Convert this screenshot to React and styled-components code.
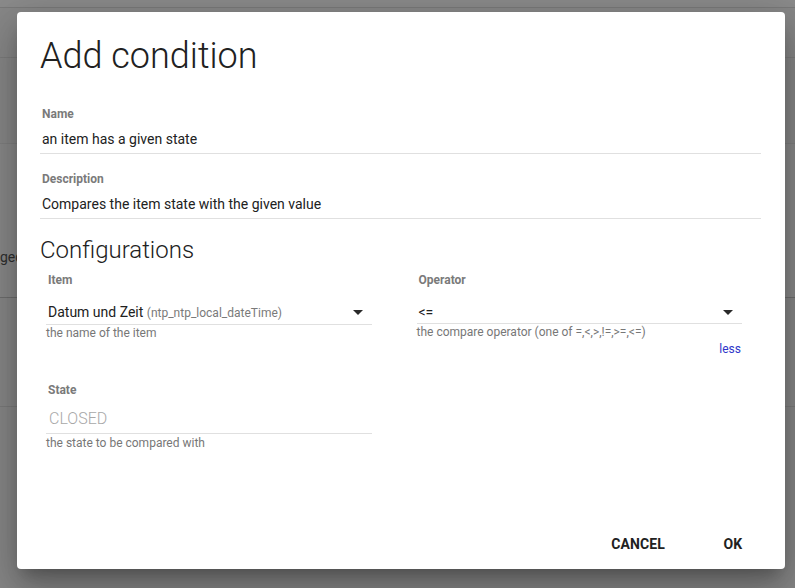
import React from 'react'
import styled, { createGlobalStyle } from 'styled-components'

const GlobalStyle = createGlobalStyle`
  html, body {
    margin: 0;
    padding: 0;
    font-family: Roboto, "Noto Sans", sans-serif;
  }
  * { box-sizing: border-box; }
`

// the page behind the modal, dimmed by the overlay
const Page = styled.div`
  position: relative;
  width: 795px;
  height: 588px;
  overflow: hidden;
  background: #888888;
  display: flex;
  flex-direction: column;
`

const Band = styled.div`
  height: ${p => p.h}px;
  flex: none;
  border-bottom: 1px solid ${p => p.line || '#7d7d7d'};
  background: ${p => p.bg || 'transparent'};
  display: flex;
  align-items: ${p => p.align || 'center'};
`

const BackText = styled.span`
  font-size: 14px;
  color: #2f2f2f;
  margin-bottom: 32px;
`

const Dialog = styled.div`
  position: absolute;
  left: 17px;
  top: 12px;
  width: 768px;
  height: 557px;
  background: #fff;
  border-radius: 4px;
  box-shadow: 0 11px 15px -7px rgba(0,0,0,.25), 0 24px 38px 3px rgba(0,0,0,.16), 0 9px 46px 8px rgba(0,0,0,.14);
  display: flex;
  flex-direction: column;
  padding: 24px 24px 0 23px;
`

const Title = styled.h2`
  margin: 0;
  font-size: 36px;
  line-height: 40px;
  font-weight: 300;
  color: #212121;
`

const Field = styled.div`
  margin-top: ${p => p.top}px;
`

const Label = styled.div`
  font-size: 12px;
  line-height: 16px;
  font-weight: 700;
  color: #7a7a7a;
  padding-left: 2px;
`

const TextValue = styled.div`
  font-size: 14px;
  line-height: 20px;
  color: #212121;
  padding: 7px 0 4px 2px;
  border-bottom: 1px solid #e0e0e0;
`

const SectionTitle = styled.h3`
  margin: 15px 0 0;
  font-size: 24px;
  line-height: 32px;
  font-weight: 300;
  color: #212121;
`

const ConfigGrid = styled.div`
  margin: 6px 19px 0 6px;
  display: grid;
  grid-template-columns: 1fr 1fr;
  column-gap: 45px;
  row-gap: 25px;
  align-items: start;
`

const Select = styled.div`
  margin-top: 14px;
  display: flex;
  align-items: center;
  justify-content: space-between;
  padding: 0 9px 1px 2px;
  border-bottom: 1px solid #e0e0e0;
`

const SelectText = styled.span`
  font-size: 14px;
  line-height: 20px;
  color: #212121;
`

const Secondary = styled.span`
  font-size: 12px;
  color: #7a7a7a;
`

const Placeholder = styled.div`
  margin-top: 11px;
  font-size: 16px;
  line-height: 20px;
  font-weight: 300;
  color: #a8a8a8;
  padding: 0 0 4px 3px;
  border-bottom: 1px solid #e0e0e0;
`

const Hint = styled.div`
  font-size: 12px;
  line-height: 16px;
  color: #777;
  margin-top: ${p => p.top || 0}px;
`

const LessLink = styled.a`
  display: block;
  text-align: right;
  margin-top: 1px;
  padding-right: 1px;
  font-size: 12px;
  line-height: 16px;
  color: #2f36c9;
  text-decoration: none;
`

const Footer = styled.div`
  margin: auto -24px 0 0;
  display: flex;
  justify-content: flex-end;
  gap: 7px;
  padding: 0 8px 7px 0;
`

const Button = styled.button`
  min-width: 88px;
  height: 36px;
  padding: 0 16px;
  border: none;
  background: transparent;
  font-family: Roboto, "Noto Sans", sans-serif;
  font-size: 14px;
  font-weight: 700;
  color: #212121;
  letter-spacing: 0.1px;
`

const Arrow = () => (
  <svg width="10" height="5" viewBox="0 0 10 5">
    <path d="M0 0 L10 0 L5 5 Z" fill="#2a2a2a" />
  </svg>
)

export default function App() {
  return (
    <>
      <GlobalStyle />
      <Page>
        <Band h={8} bg="#8b8b8b" line="#7a7a7a" />
        <Band h={50} />
        <Band h={86} line="#818181" />
        <Band h={154} bg="#8a8a8a" line="#6f6f6f" align="flex-end">
          <BackText>ged</BackText>
        </Band>
        <Band h={109} line="#7c7c7c" />

        <Dialog>
          <Title>Add condition</Title>

          <Field top={30}>
            <Label>Name</Label>
            <TextValue>an item has a given state</TextValue>
          </Field>
          <Field top={17}>
            <Label>Description</Label>
            <TextValue>Compares the item state with the given value</TextValue>
          </Field>

          <SectionTitle>Configurations</SectionTitle>

          <ConfigGrid>
            <div>
              <Label>Item</Label>
              <Select>
                <SelectText>
                  Datum und Zeit <Secondary>(ntp_ntp_local_dateTime)</Secondary>
                </SelectText>
                <Arrow />
              </Select>
              <Hint>the name of the item</Hint>
            </div>
            <div>
              <Label>Operator</Label>
              <Select>
                <SelectText>&lt;=</SelectText>
                <Arrow />
              </Select>
              <Hint>the compare operator (one of =,&lt;,&gt;,!=,&gt;=,&lt;=)</Hint>
              <LessLink href="#less">less</LessLink>
            </div>
            <div>
              <Label>State</Label>
              <Placeholder>CLOSED</Placeholder>
              <Hint top={1}>the state to be compared with</Hint>
            </div>
          </ConfigGrid>

          <Footer>
            <Button>CANCEL</Button>
            <Button>OK</Button>
          </Footer>
        </Dialog>
      </Page>
    </>
  )
}
